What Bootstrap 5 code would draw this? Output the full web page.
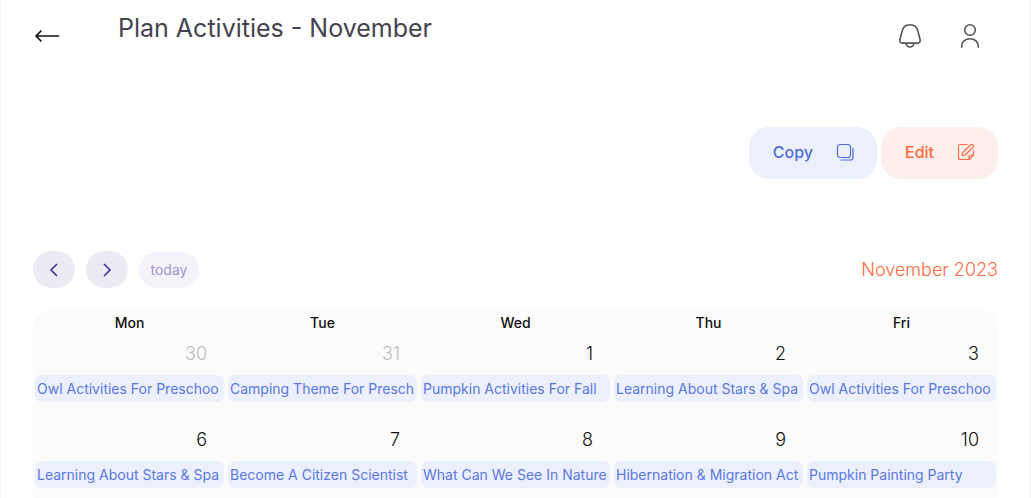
<!DOCTYPE html>
<html lang="en">
<head>
<meta charset="utf-8">
<meta name="viewport" content="width=device-width, initial-scale=1">
<title>Plan Activities - November</title>
<link href="https://cdn.jsdelivr.net/npm/bootstrap@5.3.0/dist/css/bootstrap.min.css" rel="stylesheet">
<style>
  body { font-family: Inter, "Liberation Sans", sans-serif; font-weight: 300; color: #111; }
  .page { border-left: 1px solid #f3f3f6; border-right: 1px solid #ececee; padding: 0 32px; }
  .topbar { height: 72px; }
  .topbar h1 { font-size: 25px; line-height: 32px; font-weight: 400; color: #45434f; margin: 12px 0 0 57px; }
  .icon-btn { color: #555; line-height: 0; }
  .back { color: #111; }
  .back, .tools { margin-top: 22px; }
  .tools { gap: 32px; padding-right: 14px; }
  .actions { padding-top: 55px; gap: 4px; }
  .action { height: 52px; border: 0; border-radius: 20px; padding: 0 22px 2px 24px; font-size: 16px; font-weight: 500; gap: 22px; }
  .action-copy { background: #ecf0fc; color: #4f6edb; }
  .action-edit { background: #fdeeeb; color: #ff6b42; }
  .cal-bar { padding-top: 72px; }
  .month-nav { gap: 11px; }
  .round { width: 42px; height: 37px; border: 0; border-radius: 19px; background: #ecebf4; color: #4a35a0; }
  .today { width: 60px; height: 36px; border: 0; border-radius: 18px; background: #f4f3f9; color: #a195cf; font-size: 14px; }
  .month { font-size: 18px; line-height: 24px; font-weight: 300; color: #ff6b42; }
  .calendar { table-layout: fixed; border-collapse: collapse; background: #fbfbfb; border-radius: 20px; margin-top: 21px; }
  .calendar th { height: 31px; padding: 4px 0 0; font-size: 14px; line-height: 20px; font-weight: 500; text-align: center; vertical-align: top; }
  .calendar td { height: 86px; padding: 0 2px; vertical-align: top; }
  .day { font-size: 18px; line-height: 28px; text-align: right; padding-right: 17px; }
  .other { color: #bbb; }
  .event { display: block; height: 27px; margin-top: 7px; padding: 0 2px; border-radius: 7px; background: #ecf0fc; color: #5b78e0; font-size: 14px; line-height: 27px; font-weight: 400; white-space: nowrap; overflow: hidden; text-decoration: none; }
</style>
</head>
<body>
<main class="page vh-100 overflow-hidden">
  <header class="topbar d-flex align-items-start">
    <a href="#" class="icon-btn back" aria-label="Back">
      <svg width="28" height="28" viewBox="0 0 28 28" fill="none" stroke="currentColor" stroke-width="1.7" stroke-linecap="round" stroke-linejoin="round"><path d="M25.500 14H3M8 9l-5 5 5 5"/></svg>
    </a>
    <h1>Plan Activities - November</h1>
    <nav class="tools d-flex ms-auto">
      <a href="#" class="icon-btn" aria-label="Notifications">
        <svg width="28" height="28" viewBox="0 0 28 28" fill="none" stroke="currentColor" stroke-width="1.600" stroke-linejoin="round"><path d="M14 2.700c-4.200 0-7.300 2.700-8 6.800L3.900 17.800c-.4 2 .8 3.300 2.900 3.300h14.400c2.100 0 3.300-1.300 2.900-3.300L22 9.500c-.7-4.100-3.800-6.800-8-6.800z"/><path d="M10 21.400c.5 2.400 2 3.600 4 3.600s3.500-1.200 4-3.600"/></svg>
      </a>
      <a href="#" class="icon-btn" aria-label="Profile">
        <svg width="28" height="28" viewBox="0 0 28 28" fill="none" stroke="currentColor" stroke-width="1.600"><circle cx="14" cy="8" r="5.300"/><path d="M5.700 25.700v-1.500c0-4.200 3.500-7.500 8.300-7.500s8.300 3.300 8.300 7.500v1.500"/></svg>
      </a>
    </nav>
  </header>

  <div class="actions d-flex justify-content-end">
    <button type="button" class="action action-copy d-flex align-items-center">Copy
      <svg width="20" height="20" viewBox="0 0 20 20" fill="none" stroke="currentColor" stroke-width="1.200" stroke-linecap="round"><rect x="2.500" y="2.500" width="13" height="13" rx="2.500"/><path d="M18 6v9.500a2.500 2.500 0 0 1-2.500 2.500H6"/></svg>
    </button>
    <button type="button" class="action action-edit d-flex align-items-center">Edit
      <svg width="20" height="20" viewBox="0 0 20 20" fill="none" stroke="currentColor" stroke-width="1.200" stroke-linecap="round" stroke-linejoin="round"><path d="M11 2.500H4.500a2 2 0 0 0-2 2v11a2 2 0 0 0 2 2H13l4.500-4.500V8.500M13 17.500V15a2 2 0 0 1 2-2h2.500"/><path d="M6 13.500l.8-3 7.700-7.500a1.600 1.600 0 0 1 2.500 2.300L9.300 12.800z"/></svg>
    </button>
  </div>

  <div class="cal-bar d-flex align-items-center">
    <div class="month-nav d-flex align-items-center">
      <button type="button" class="round d-flex align-items-center justify-content-center" aria-label="Previous month">
        <svg width="16" height="16" viewBox="0 0 16 16" fill="none" stroke="currentColor" stroke-width="1.700"><path d="M11 2L5 8l6 6"/></svg>
      </button>
      <button type="button" class="round d-flex align-items-center justify-content-center" aria-label="Next month">
        <svg width="16" height="16" viewBox="0 0 16 16" fill="none" stroke="currentColor" stroke-width="1.700"><path d="M5 2l6 6-6 6"/></svg>
      </button>
      <button type="button" class="today p-0">today</button>
    </div>
    <h2 class="month ms-auto mb-0">November 2023</h2>
  </div>

  <table class="calendar w-100">
    <thead><tr><th>Mon</th><th>Tue</th><th>Wed</th><th>Thu</th><th>Fri</th></tr></thead>
    <tbody>
      <tr>
        <td><div class="day other">30</div><a href="#" class="event">Owl Activities For Preschoo</a></td>
        <td><div class="day other">31</div><a href="#" class="event">Camping Theme For Presch</a></td>
        <td><div class="day">1</div><a href="#" class="event">Pumpkin Activities For Fall</a></td>
        <td><div class="day">2</div><a href="#" class="event">Learning About Stars &amp; Spa</a></td>
        <td><div class="day">3</div><a href="#" class="event">Owl Activities For Preschoo</a></td>
      </tr>
      <tr>
        <td><div class="day">6</div><a href="#" class="event">Learning About Stars &amp; Spa</a></td>
        <td><div class="day">7</div><a href="#" class="event">Become A Citizen Scientist</a></td>
        <td><div class="day">8</div><a href="#" class="event">What Can We See In Nature</a></td>
        <td><div class="day">9</div><a href="#" class="event">Hibernation &amp; Migration Act</a></td>
        <td><div class="day">10</div><a href="#" class="event">Pumpkin Painting Party</a></td>
      </tr>
    </tbody>
  </table>
</main>
<script src="https://cdn.jsdelivr.net/npm/bootstrap@5.3.0/dist/js/bootstrap.bundle.min.js"></script>
</body>
</html>
